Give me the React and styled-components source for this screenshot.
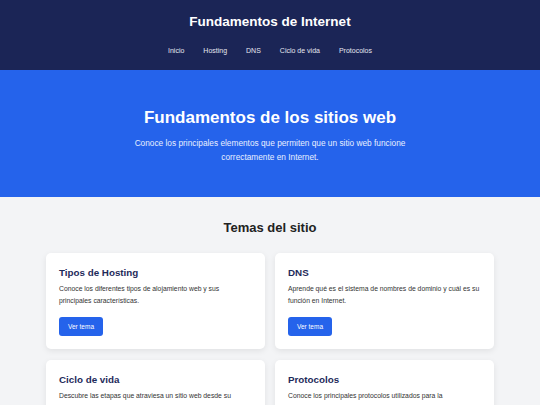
import React from 'react';
import styled, { createGlobalStyle } from 'styled-components';

const GlobalStyle = createGlobalStyle`
  * { box-sizing: border-box; }
  body {
    margin: 0;
    font-family: "Liberation Sans", Arial, sans-serif;
    background-color: #f3f4f6;
    color: #333;
  }
`;

const Header = styled.header`
  background-color: #1b2556;
  color: white;
  text-align: center;
  height: 70px;
  padding-top: 13px;
`;

const SiteTitle = styled.h1`
  margin: 0;
  font-size: 13.5px;
  line-height: 18px;
  font-weight: bold;
`;

const Nav = styled.nav`
  display: flex;
  justify-content: center;
  gap: 19px;
  margin-top: 15px;
`;

const NavLink = styled.a`
  color: #e5e7f0;
  font-size: 7px;
  text-decoration: none;
  line-height: 10px;
`;

const Hero = styled.section`
  background-color: #2563eb;
  color: white;
  text-align: center;
  height: 127px;
  padding-top: 37px;
`;

const HeroTitle = styled.h2`
  margin: 0;
  font-size: 17px;
  line-height: 22px;
  font-weight: bold;
`;

const HeroText = styled.p`
  margin: 7px auto 0;
  max-width: 285px;
  font-size: 8.3px;
  line-height: 14px;
  color: #e8efff;
`;

const Topics = styled.main`
  padding: 20px 0 20px;
`;

const SectionTitle = styled.h3`
  margin: 0 0 14px;
  text-align: center;
  font-size: 13px;
  line-height: 22px;
  color: #222;
`;

const Grid = styled.div`
  display: grid;
  grid-template-columns: 219px 219px;
  gap: 11px 10px;
  justify-content: center;
`;

const Card = styled.article`
  background: white;
  border-radius: 5px;
  padding: 13px;
  box-shadow: 0 2px 6px rgba(0, 0, 0, 0.08);
`;

const CardTitle = styled.h4`
  margin: 0 0 3px;
  font-size: 9.8px;
  line-height: 14px;
  color: #1e2a5a;
`;

const CardText = styled.p`
  margin: 0 0 8px;
  font-size: 6.8px;
  line-height: 12px;
  color: #333;
`;

const Button = styled.button`
  background-color: #2563eb;
  color: white;
  border: none;
  border-radius: 3px;
  width: 44px;
  height: 19px;
  font-family: inherit;
  font-size: 6.5px;
  padding: 0;
  cursor: pointer;
`;

const navItems = ['Inicio', 'Hosting', 'DNS', 'Ciclo de vida', 'Protocolos'];

const topics = [
  { title: 'Tipos de Hosting', text: 'Conoce los diferentes tipos de alojamiento web y sus principales características.' },
  { title: 'DNS', text: 'Aprende qué es el sistema de nombres de dominio y cuál es su función en Internet.' },
  { title: 'Ciclo de vida', text: 'Descubre las etapas que atraviesa un sitio web desde su creación hasta su publicación.' },
  { title: 'Protocolos', text: 'Conoce los principales protocolos utilizados para la comunicación en la web.' },
];

const App = () => (
  <>
    <GlobalStyle />
    <Header>
      <SiteTitle>Fundamentos de Internet</SiteTitle>
      <Nav>
        {navItems.map((item) => (
          <NavLink key={item} href="#">{item}</NavLink>
        ))}
      </Nav>
    </Header>
    <Hero>
      <HeroTitle>Fundamentos de los sitios web</HeroTitle>
      <HeroText>
        Conoce los principales elementos que permiten que un sitio web funcione correctamente en Internet.
      </HeroText>
    </Hero>
    <Topics>
      <SectionTitle>Temas del sitio</SectionTitle>
      <Grid>
        {topics.map((t) => (
          <Card key={t.title}>
            <CardTitle>{t.title}</CardTitle>
            <CardText>{t.text}</CardText>
            <Button>Ver tema</Button>
          </Card>
        ))}
      </Grid>
    </Topics>
  </>
);

export default App;
